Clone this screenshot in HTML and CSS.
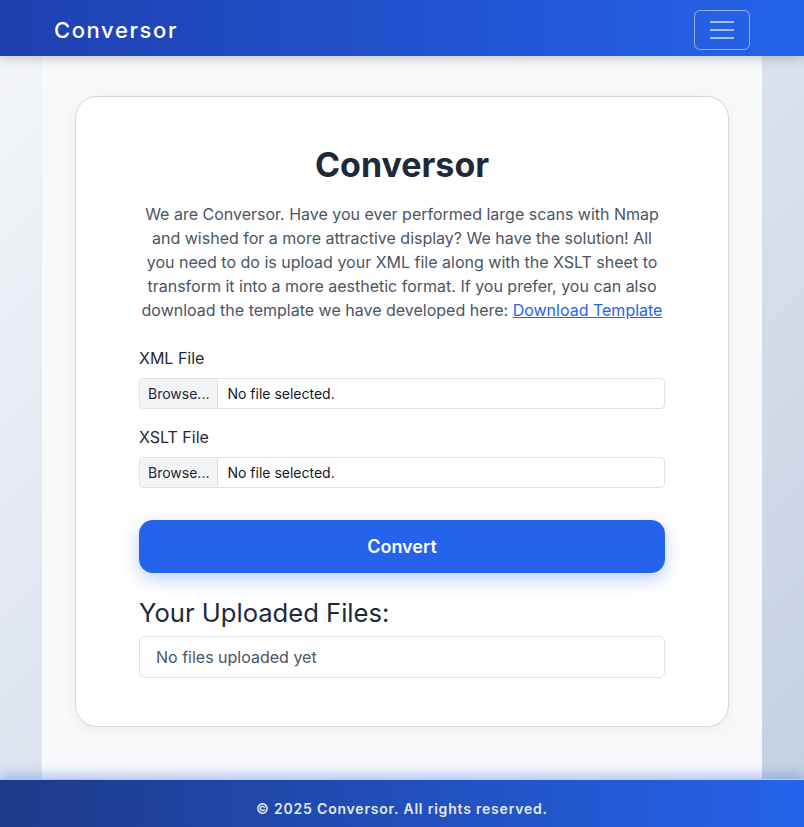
FILE: index.html
```html
<!DOCTYPE html>
<html lang="en">
<head>
<meta charset="UTF-8">
<title>Conversor</title>
<link rel="stylesheet" href="styles.css">
</head>
<body>

<nav class="navbar">
    <a class="brand" href="#">Conversor</a>
    <button class="toggler" aria-label="Menu">
        <span></span><span></span><span></span>
    </button>
</nav>

<main class="container">
    <div class="card">
        <h1>Conversor</h1>
        <p class="intro">We are Conversor. Have you ever performed large scans with Nmap and wished for a more attractive display? We have the solution! All you need to do is upload your XML file along with the XSLT sheet to transform it into a more aesthetic format. If you prefer, you can also download the template we have developed here: <a href="#">Download Template</a></p>

        <form class="upload">
            <label>XML File</label>
            <div class="file">
                <span class="browse">Browse...</span>
                <span class="name">No file selected.</span>
            </div>

            <label>XSLT File</label>
            <div class="file">
                <span class="browse">Browse...</span>
                <span class="name">No file selected.</span>
            </div>

            <button type="button" class="convert">Convert</button>
        </form>

        <h3 class="files-title">Your Uploaded Files:</h3>
        <ul class="files">
            <li>No files uploaded yet</li>
        </ul>
    </div>
</main>

<footer class="footer">
    &copy; 2025 Conversor. All rights reserved.
</footer>

</body>
</html>
```

FILE: styles.css
```css
* {
    box-sizing: border-box;
}

html, body {
    height: 100%;
}

body {
    margin: 0;
    font-family: Inter, "Noto Sans", sans-serif;
    background: linear-gradient(135deg, #f5f7fa 0%, #c3cfe2 100%);
    display: flex;
    flex-direction: column;
    min-height: 100vh;
    color: #1e293b;
}

.navbar {
    height: 56px;
    flex-shrink: 0;
    display: flex;
    align-items: center;
    justify-content: space-between;
    padding: 3px 54px 0;
    background: linear-gradient(90deg, #1e40af, #2563eb);
    box-shadow: 0 2px 12px rgba(0, 0, 0, 0.22);
    position: relative;
    z-index: 2;
}

.brand {
    color: #fff;
    text-decoration: none;
    font-size: 22px;
    font-weight: 500;
    letter-spacing: 1.6px;
}

.toggler {
    width: 56px;
    height: 40px;
    background: transparent;
    border: 1px solid rgba(255, 255, 255, 0.5);
    border-radius: 6px;
    display: flex;
    flex-direction: column;
    justify-content: center;
    align-items: center;
    gap: 6px;
    padding: 0;
}

.toggler span {
    display: block;
    width: 24px;
    height: 2px;
    background: rgba(255, 255, 255, 0.6);
}

.container {
    flex: 1;
    width: 720px;
    margin: 0 auto;
    background: #f8f9fb;
    padding: 40px 33px 46px;
}

.card {
    background: #fff;
    border: 1px solid #d4d7de;
    border-radius: 22px;
    padding: 48px 63px 48px;
    box-shadow: 0 4px 16px rgba(0, 0, 0, 0.05);
}

h1 {
    margin: 0 0 16px;
    text-align: center;
    font-size: 34px;
    font-weight: 700;
    color: #1e293b;
    line-height: 1.2;
}

.intro {
    margin: 0 0 24px;
    text-align: center;
    font-size: 16px;
    line-height: 24px;
    color: #4b5563;
}

.intro a {
    color: #2563eb;
}

.upload label {
    display: block;
    font-size: 16px;
    color: #1f2937;
    line-height: 24px;
    margin-bottom: 8px;
}

.file {
    display: flex;
    height: 31px;
    border: 1px solid #dee2e6;
    border-radius: 4px;
    font-size: 14px;
    margin-bottom: 16px;
    overflow: hidden;
}

.browse {
    background: #f3f4f6;
    border-right: 1px solid #dee2e6;
    padding: 0 8px;
    display: flex;
    align-items: center;
    color: #1f2937;
}

.name {
    padding: 0 9px;
    display: flex;
    align-items: center;
    color: #111827;
}

.convert {
    display: block;
    width: 100%;
    height: 53px;
    margin-top: 32px;
    border: none;
    border-radius: 14px;
    background: #2563eb;
    color: #fff;
    font-family: inherit;
    font-size: 18px;
    font-weight: 600;
    box-shadow: 0 6px 18px rgba(37, 99, 235, 0.3);
}

.files-title {
    margin: 25px 0 7px;
    font-size: 25.6px;
    font-weight: 400;
    line-height: 1.2;
    color: #1e293b;
}

.files {
    list-style: none;
    margin: 0;
    padding: 0;
}

.files li {
    border: 1px solid #dee2e6;
    border-radius: 6px;
    padding: 9px 16px;
    font-size: 16px;
    line-height: 22px;
    color: #4b5563;
}

.footer {
    flex-shrink: 0;
    height: 48px;
    display: flex;
    align-items: center;
    justify-content: center;
    padding-top: 9px;
    background: linear-gradient(90deg, #1e3a8a, #2563eb);
    border-top: 1px solid rgba(255, 255, 255, 0.7);
    box-shadow: 0 -4px 12px rgba(37, 99, 235, 0.35);
    color: #e5e7eb;
    font-size: 14px;
    font-weight: 600;
    letter-spacing: 0.8px;
    position: relative;
}
```
